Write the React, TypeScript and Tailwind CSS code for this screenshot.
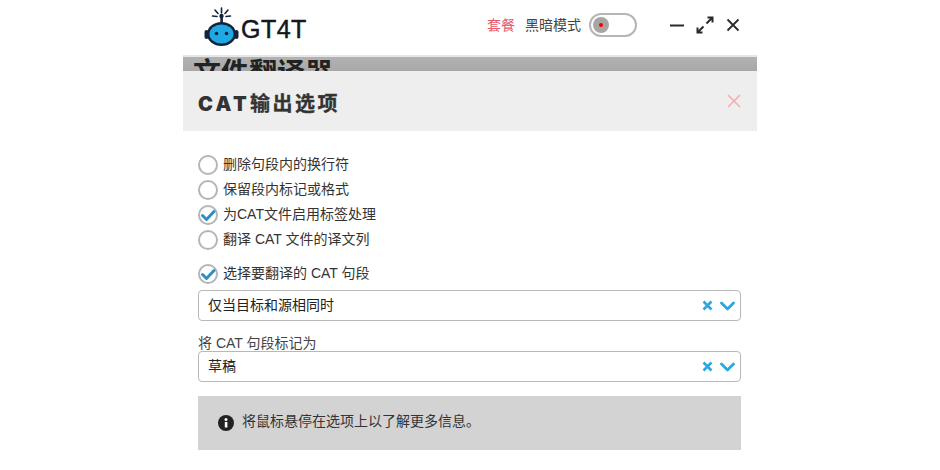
import React from "react";

const font = { fontFamily: '"Liberation Sans", "Noto Sans CJK SC", sans-serif' };

function Logo() {
  return (
    <svg width="36" height="42" viewBox="0 0 36 42" className="block">
      <g stroke="#14233c" strokeWidth="1.6" strokeLinecap="round">
        <line x1="17.5" y1="4" x2="17.5" y2="9" />
        <line x1="11" y1="6" x2="14" y2="9.5" />
        <line x1="24" y1="6" x2="21" y2="9.5" />
        <line x1="8.5" y1="12" x2="13" y2="12.5" />
        <line x1="26.5" y1="12" x2="22" y2="12.5" />
      </g>
      <rect x="16.3" y="11" width="2.6" height="9" fill="#14233c" />
      <circle cx="17.5" cy="12" r="2.2" fill="#14233c" />
      <ellipse cx="17.5" cy="30" rx="14.5" ry="12" fill="#14233c" />
      <rect x="0.5" y="26" width="4" height="9" rx="2" fill="#14233c" />
      <rect x="30.5" y="26" width="4" height="9" rx="2" fill="#14233c" />
      <ellipse cx="17.5" cy="30" rx="12" ry="9.5" fill="#1fa9e4" />
      <circle cx="12.5" cy="29.5" r="1.8" fill="#14233c" />
      <circle cx="22.5" cy="29.5" r="1.8" fill="#14233c" />
    </svg>
  );
}

function Radio({ checked, label, className = "" }: { checked?: boolean; label: string; className?: string }) {
  return (
    <div className={`flex h-[25px] items-center gap-[5px] ${className}`}>
      <span className="relative h-5 w-5 shrink-0 rounded-full border-2 border-[#b5b5b5] bg-white">
        {checked && (
          <svg width="20" height="20" viewBox="0 0 20 20" className="absolute -left-[2px] -top-[2px]">
            <path d="M4.5 10.5 L8.5 14.5 L16 6.5" fill="none" stroke="#2f8fc4" strokeWidth="3" strokeLinecap="round" strokeLinejoin="round" />
          </svg>
        )}
      </span>
      <span className="text-[14px] text-[#333]">{label}</span>
    </div>
  );
}

function Select({ value }: { value: string }) {
  return (
    <div className="flex h-[31px] items-center justify-between rounded-[4px] border border-[#b8b8b8] bg-white pl-[9px] pr-[5px]">
      <span className="text-[14px] text-[#222]">{value}</span>
      <span className="flex items-center gap-[7px]">
        <svg width="11" height="11" viewBox="0 0 11 11">
          <path d="M1.5 1.5 L9.5 9.5 M9.5 1.5 L1.5 9.5" stroke="#2ea6de" strokeWidth="2.6" />
        </svg>
        <svg width="15" height="10" viewBox="0 0 15 10">
          <path d="M1.5 2 L7.5 8 L13.5 2" fill="none" stroke="#2ea6de" strokeWidth="2.8" strokeLinecap="round" strokeLinejoin="round" />
        </svg>
      </span>
    </div>
  );
}

export default function App() {
  return (
    <div className="mx-auto h-[470px] w-[574px] overflow-hidden bg-white" style={font}>
      <header className="flex h-[55px] items-center justify-between pl-[21px] pr-[17px]">
        <div className="flex items-center gap-[1px] pb-[6px]">
          <Logo />
          <span className="mt-[10px] text-[25px] font-normal leading-none tracking-[0.5px] text-[#14171f]" style={{ WebkitTextStroke: "0.5px #14171f" }}>GT4T</span>
        </div>
        <div className="flex items-center pb-[5px]">
          <span className="text-[14px] text-[#e8596c]">套餐</span>
          <span className="ml-[10px] text-[14px] text-[#444]">黑暗模式</span>
          <span className="ml-[8px] flex h-6 w-12 items-center rounded-full border-2 border-[#b5b5b5] bg-white pl-[2px]">
            <span className="flex h-4 w-4 items-center justify-center rounded-full bg-[#a8a6a2]">
              <span className="h-[4px] w-[4px] rounded-full bg-[#f00000]" />
            </span>
          </span>
          <span className="ml-[33px] flex items-center gap-[12px]">
            <svg width="14" height="15" viewBox="0 0 14 15"><path d="M0 7.5 H14" stroke="#2b2b2b" strokeWidth="2" /></svg>
            <svg width="18" height="18" viewBox="0 0 18 18">
              <path d="M10.5 7.5 L16 2 M11.5 1.5 H16.5 V6.5 M7.5 10.5 L2 16 M1.5 11.5 V16.5 H6.5" fill="none" stroke="#2b2b2b" strokeWidth="2" />
            </svg>
            <svg width="14" height="14" viewBox="0 0 14 14">
              <path d="M1.5 1.5 L12.5 12.5 M12.5 1.5 L1.5 12.5" stroke="#2b2b2b" strokeWidth="1.8" />
            </svg>
          </span>
        </div>
      </header>
      <div className="h-[2px] bg-[#e6e6e6]" />
      <div className="h-[14px] overflow-hidden bg-[linear-gradient(#b2b2b2,#a8a8a8)] pl-[10px]">
        <div className="mt-[2px] text-[28px] font-bold leading-[30px] text-[#222]">文件翻译器</div>
      </div>
      <div className="flex h-[60px] items-center justify-between bg-[#eeeeee] pl-[15px] pr-[16px]">
        <h1 className="mt-[5px] text-[20px] font-bold tracking-[2.5px] text-[#333]" style={{ WebkitTextStroke: "0.3px #333" }}>
          <span className="font-black tracking-[3.3px]" style={{ fontFamily: "Inter, sans-serif", WebkitTextStroke: "0" }}>CAT</span>输出选项
        </h1>
        <svg width="14" height="14" viewBox="0 0 14 14" className="mt-[-1px]"><path d="M1 1 L13 13 M13 1 L1 13" stroke="#f4b0b4" strokeWidth="1.7" /></svg>
      </div>
      <div className="px-[15px] pr-[16px] pt-[21px]">
        <Radio label="删除句段内的换行符" />
        <Radio label="保留段内标记或格式" />
        <Radio checked label="为CAT文件启用标签处理" />
        <Radio checked={false} label="翻译 CAT 文件的译文列" />
        <Radio checked label="选择要翻译的 CAT 句段" className="mt-[9px]" />
        <div className="mt-[4px]"><Select value="仅当目标和源相同时" /></div>
        <div className="mt-[14px] h-[16px] text-[14px] leading-[16px] text-[#444]">将 CAT 句段标记为</div>
        <Select value="草稿" />
        <div className="mt-[14px] flex h-[54px] items-center gap-[8px] bg-[#d3d3d3] pl-[20px]">
          <svg width="16" height="16" viewBox="0 0 16 16">
            <circle cx="8" cy="8" r="8" fill="#222" />
            <rect x="6.8" y="7" width="2.6" height="5.5" fill="#fff" />
            <circle cx="8" cy="4.6" r="1.5" fill="#fff" />
          </svg>
          <span className="-mt-[3px] text-[14px] text-[#333]">将鼠标悬停在选项上以了解更多信息。</span>
        </div>
      </div>
    </div>
  );
}
